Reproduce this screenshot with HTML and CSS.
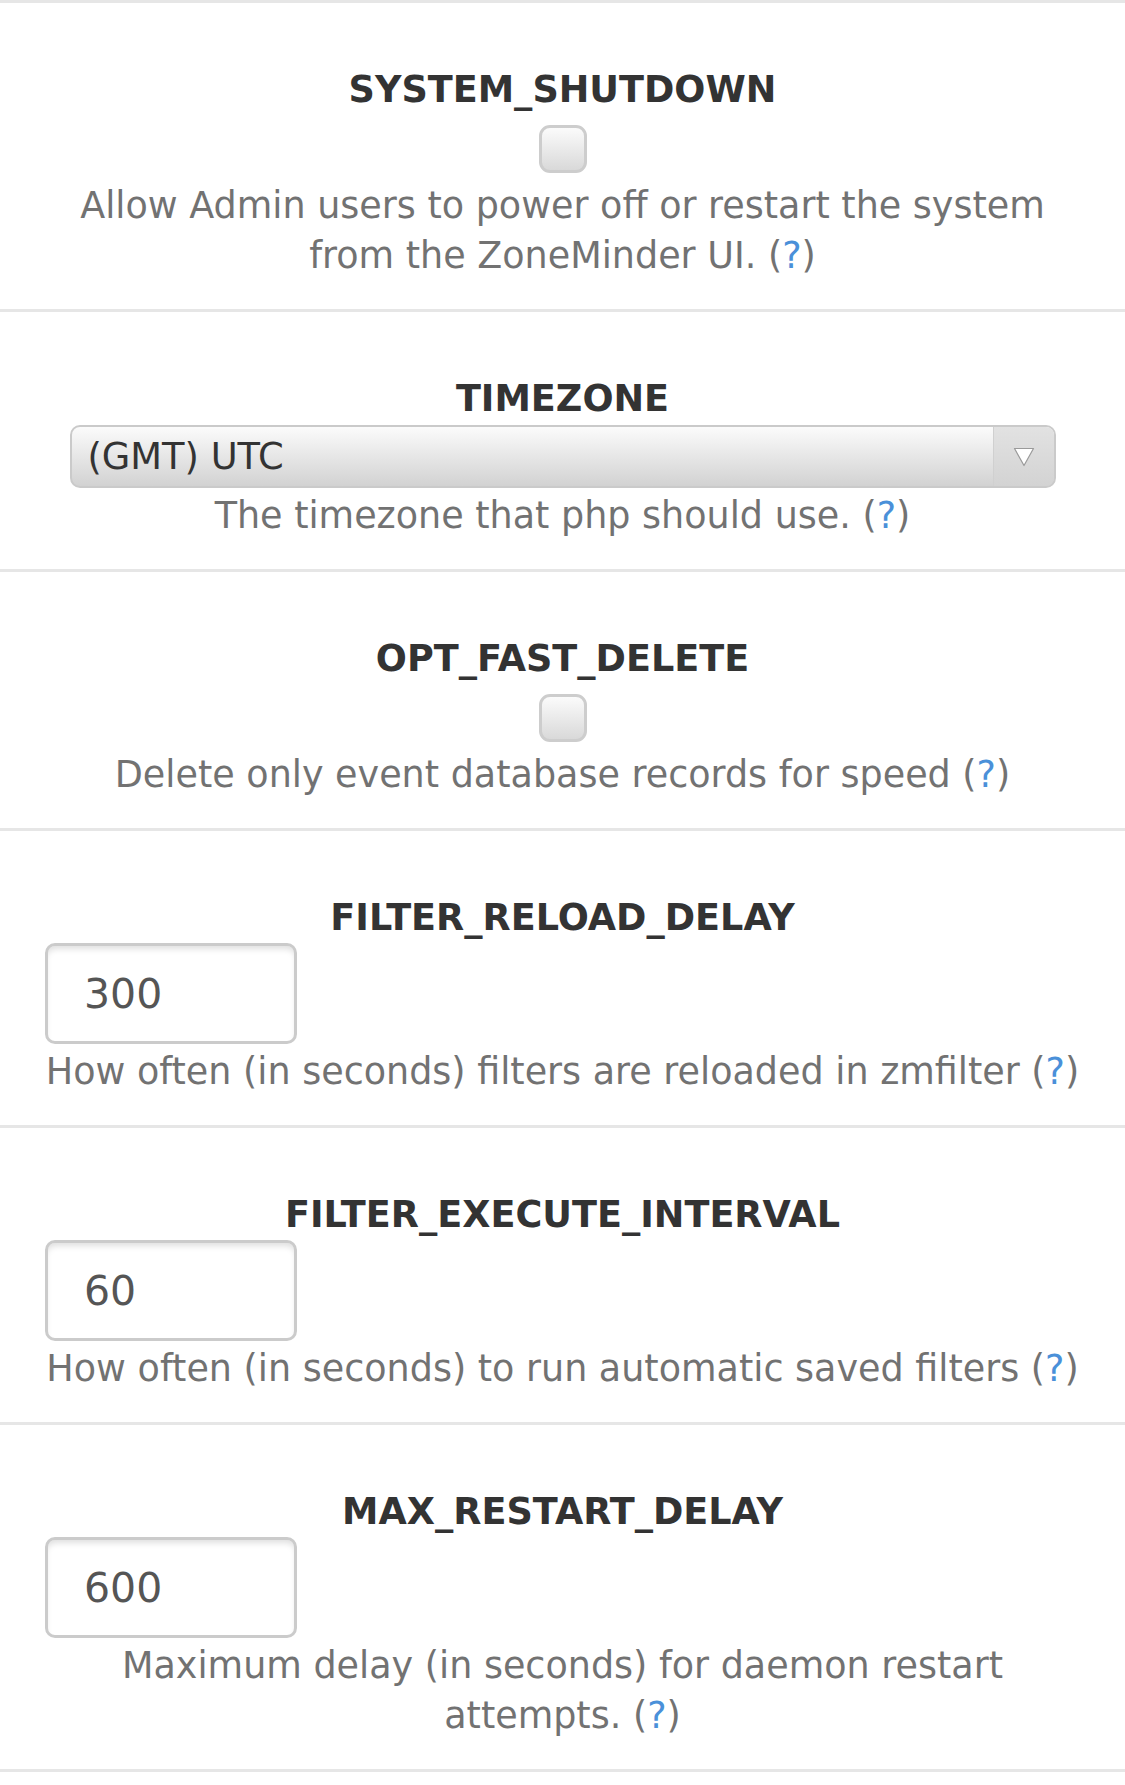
FILE: index.html
```html
<!DOCTYPE html>
<html lang="en">
<head>
    <meta charset="UTF-8">
    <meta name="viewport" content="width=device-width, initial-scale=1.0">
    <title>Options - System</title>
    <link rel="stylesheet" href="styles.css">
</head>
<body>

    <div class="options">

        <div class="option">
            <div class="name">SYSTEM_SHUTDOWN</div>
            <input type="checkbox" class="check" name="ZM_SYSTEM_SHUTDOWN">
            <div class="desc">Allow Admin users to power off or restart the system from the ZoneMinder UI. (<a href="#">?</a>)</div>
        </div>

        <div class="option">
            <div class="name">TIMEZONE</div>
            <div class="select-wrap">
                <select class="select" name="ZM_TIMEZONE">
                    <option>(GMT) UTC</option>
                </select>
                <span class="arrow">
                    <svg width="22" height="20" viewBox="0 0 22 20">
                        <path d="M1.5 1.5 L20.5 1.5 L11 18.5 Z" fill="#fff" stroke="#9a9a9a" stroke-width="1.2" stroke-linejoin="round"/>
                    </svg>
                </span>
            </div>
            <div class="desc">The timezone that php should use. (<a href="#">?</a>)</div>
        </div>

        <div class="option">
            <div class="name">OPT_FAST_DELETE</div>
            <input type="checkbox" class="check" name="ZM_OPT_FAST_DELETE">
            <div class="desc">Delete only event database records for speed (<a href="#">?</a>)</div>
        </div>

        <div class="option">
            <div class="name">FILTER_RELOAD_DELAY</div>
            <input type="text" class="field" name="ZM_FILTER_RELOAD_DELAY" value="300">
            <div class="desc">How often (in seconds) filters are reloaded in zmfilter (<a href="#">?</a>)</div>
        </div>

        <div class="option">
            <div class="name">FILTER_EXECUTE_INTERVAL</div>
            <input type="text" class="field" name="ZM_FILTER_EXECUTE_INTERVAL" value="60">
            <div class="desc">How often (in seconds) to run automatic saved filters (<a href="#">?</a>)</div>
        </div>

        <div class="option">
            <div class="name">MAX_RESTART_DELAY</div>
            <input type="text" class="field" name="ZM_MAX_RESTART_DELAY" value="600">
            <div class="desc">Maximum delay (in seconds) for daemon restart attempts. (<a href="#">?</a>)</div>
        </div>

    </div>

</body>
</html>
```

FILE: styles.css
```css
body {
    margin: 0;
    padding: 0;
    background: #fff;
    font-family: 'DejaVu Sans', Verdana, sans-serif;
    color: #333;
}

.options {
    border-top: 3px solid #e6e6e6;
}

.option {
    padding: 62px 40px 28px;
    border-bottom: 3px solid #e6e6e6;
    text-align: center;
}

.name {
    font-size: 36.6px;
    line-height: 50px;
    font-weight: bold;
    color: #333;
}

.desc {
    margin-top: 3px;
    font-size: 36.5px;
    line-height: 50px;
    color: #727272;
}

.desc a {
    color: #4a90d9;
    text-decoration: none;
}

/* checkbox */
.check {
    -webkit-appearance: none;
    appearance: none;
    display: block;
    width: 48px;
    height: 48px;
    margin: 10px auto 8px;
    border: 3px solid #cdcdcd;
    border-radius: 11px;
    background: linear-gradient(#fbfbfb, #d9d9d9);
    box-sizing: border-box;
}

/* select */
.select-wrap {
    position: relative;
    width: 986px;
    height: 63px;
    margin: 1px auto 0;
}

.select {
    -webkit-appearance: none;
    appearance: none;
    width: 100%;
    height: 100%;
    padding: 0 70px 0 16px;
    border: 2px solid #cacaca;
    border-radius: 10px;
    background: linear-gradient(#fbfbfb, #d2d2d2);
    font-family: 'DejaVu Sans', Verdana, sans-serif;
    font-size: 36.8px;
    color: #333;
    box-sizing: border-box;
    outline: none;
}

.arrow {
    position: absolute;
    top: 2px;
    right: 2px;
    bottom: 2px;
    width: 60px;
    display: flex;
    align-items: center;
    justify-content: center;
    border-left: 1px solid #d0d0d0;
    border-radius: 0 8px 8px 0;
    background: linear-gradient(#e2e2e2, #d3d3d3);
    pointer-events: none;
}

/* text inputs */
.field {
    display: block;
    width: 252px;
    height: 101px;
    margin: 0 0 0 5px;
    padding: 0 0 0 36px;
    border: 3px solid #cbcbcb;
    border-radius: 10px;
    box-shadow: inset 0 5px 6px -2px rgba(0, 0, 0, 0.13);
    font-family: 'DejaVu Sans', Verdana, sans-serif;
    font-size: 41px;
    color: #555;
    box-sizing: border-box;
    outline: none;
}
```
